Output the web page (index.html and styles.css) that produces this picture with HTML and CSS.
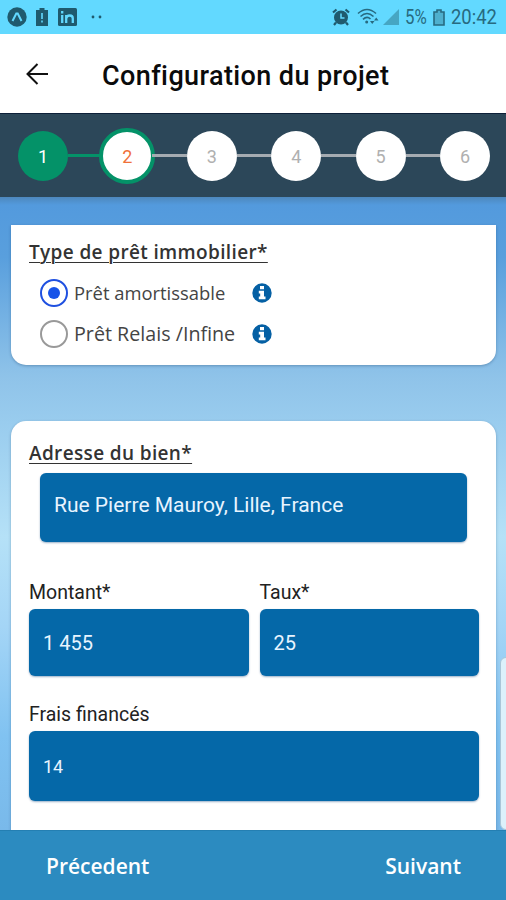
FILE: index.html
```
<!DOCTYPE html>
<html lang="fr">
<head>
    <meta charset="UTF-8">
    <meta name="viewport" content="width=device-width, initial-scale=1.0">
    <title>Configuration du projet</title>
    <link rel="stylesheet" href="styles.css">
</head>
<body>

    <!-- Barre d'état -->
    <div class="status-bar">
        <div class="status-left">
            <svg width="20" height="20" viewBox="0 0 20 20">
                <circle cx="10" cy="10" r="9.7" fill="#1f5a6e"/>
                <path d="M5.500 14L9.300 6.500H10.700L14.500 14" fill="none" stroke="#62d9ff" stroke-width="2"/>
            </svg>
            <svg class="icon-battery-low" width="12" height="18" viewBox="0 0 12 18">
                <path d="M3.500 0h5v2H12v16H0V2h3.500z" fill="#1f5a6e"/>
                <path d="M6 5v6M6 12.500v2" stroke="#62d9ff" stroke-width="1.600"/>
            </svg>
            <svg class="icon-linkedin" width="19" height="18" viewBox="0 0 19 18">
                <rect width="19" height="18" rx="1.500" fill="#1f5a6e"/>
                <path d="M4.200 7v8M4.200 3v2.500M8.200 15V7M8.200 10.500C8.800 6.500 14.800 6.500 14.800 10.500V15" fill="none" stroke="#62d9ff" stroke-width="2.300"/>
            </svg>
            <svg class="icon-dots" width="11" height="4" viewBox="0 0 11 4">
                <circle cx="2" cy="2" r="1.400" fill="#1f5a6e"/>
                <circle cx="9" cy="2" r="1.400" fill="#1f5a6e"/>
            </svg>
        </div>
        <div class="status-right">
            <svg width="18" height="18" viewBox="0 0 18 18">
                <circle cx="9" cy="9.500" r="7" fill="#1f5a6e"/>
                <path d="M1 4.500L4.500 1.500M17 4.500L13.500 1.500M4 14.500L2 17M14 14.500L16 17" stroke="#1f5a6e" stroke-width="2.200"/>
                <path d="M9 5.500V10H12.500" fill="none" stroke="#62d9ff" stroke-width="1.500"/>
            </svg>
            <svg class="icon-wifi" width="22" height="18" viewBox="0 0 22 18">
                <path d="M1 5.500Q10 -2.500 19 5.500M3.500 8.500Q10 2.500 16.500 8.500M6 11.300Q10 7.500 13.500 11" fill="none" stroke="#276a80" stroke-width="1.600"/>
                <circle cx="9.700" cy="14" r="1.500" fill="#276a80"/>
                <path d="M13 13h4.500l-2.250 3zM17 12.500h4.500l-2.250-3z" fill="#276a80"/>
            </svg>
            <svg class="icon-signal" width="16" height="16" viewBox="0 0 16 16">
                <path d="M16 0V16H0z" fill="#46a6c3"/>
            </svg>
            <span class="battery-level">5%</span>
            <svg class="icon-battery" width="12" height="17" viewBox="0 0 12 17">
                <path d="M4 1h4v2h3v13H1V3h3z" fill="#4eb0ce" stroke="#276a80" stroke-width="1.600"/>
            </svg>
            <span class="clock">20:42</span>
        </div>
    </div>

    <header>
        <svg class="back" width="22" height="22" viewBox="0 0 22 22">
            <path d="M22 11H1.500M11.500 1L1.500 11L11.500 21" fill="none" stroke="#111" stroke-width="2"/>
        </svg>
        <h1>Configuration du projet</h1>
    </header>

    <!-- Étapes -->
    <nav class="stepper">
        <div class="step done">1</div>
        <div class="line line-done"></div>
        <div class="step current">2</div>
        <div class="line"></div>
        <div class="step">3</div>
        <div class="line"></div>
        <div class="step">4</div>
        <div class="line"></div>
        <div class="step">5</div>
        <div class="line"></div>
        <div class="step">6</div>
    </nav>

    <main>
        <section class="card card-type">
            <h2>Type de prêt immobilier*</h2>
            <div class="option">
                <span class="radio checked"></span>
                <span class="option-label">Prêt amortissable</span>
                <svg class="info" width="20" height="20" viewBox="0 0 20 20">
                    <circle cx="10" cy="10" r="9.700" fill="#0560a4"/>
                    <path d="M8 3h4v3.200H8zM6.800 7.800H12v5.700h1.500V16.200H6.800v-2.700h1.400v-3H6.800z" fill="#fff"/>
                </svg>
            </div>
            <div class="option">
                <span class="radio"></span>
                <span class="option-label relais">Prêt Relais /Infine</span>
                <svg class="info" width="20" height="20" viewBox="0 0 20 20">
                    <circle cx="10" cy="10" r="9.700" fill="#0560a4"/>
                    <path d="M8 3h4v3.200H8zM6.800 7.800H12v5.700h1.500V16.200H6.800v-2.700h1.400v-3H6.800z" fill="#fff"/>
                </svg>
            </div>
        </section>

        <section class="card card-bien">
            <h2>Adresse du bien*</h2>
            <div class="field adresse">Rue Pierre Mauroy, Lille, France</div>
            <div class="row">
                <div class="col">
                    <div class="label">Montant*</div>
                    <div class="field">1 455</div>
                </div>
                <div class="col">
                    <div class="label">Taux*</div>
                    <div class="field">25</div>
                </div>
            </div>
            <div class="label">Frais financés</div>
            <div class="field frais">14</div>
        </section>
        <div class="edge-panel"></div>
    </main>

    <footer>
        <span>Précedent</span>
        <span>Suivant</span>
    </footer>

</body>
</html>
```
FILE: styles.css
```
* {
    box-sizing: border-box;
}

body {
    font-family: Roboto, sans-serif;
    margin: 0;
    height: 900px;
    display: flex;
    flex-direction: column;
    overflow: hidden;
    background-color: #fff;
    color: #222;
}

.status-bar {
    height: 34px;
    padding: 0 9px 0 7px;
    display: flex;
    justify-content: space-between;
    align-items: center;
    background-color: #62d9ff;
    color: #276a80;
}

.status-left, .status-right {
    display: flex;
    align-items: center;
}

.icon-battery-low {
    margin-left: 9px;
}

.icon-linkedin {
    margin-left: 10px;
}

.icon-dots {
    margin-left: 14px;
}

.icon-wifi {
    margin-left: 7px;
}

.icon-signal {
    margin-left: 4px;
}

.battery-level, .clock {
    font-size: 20px;
    line-height: 34px;
    transform-origin: left center;
    white-space: nowrap;
}

.battery-level {
    width: 23px;
    margin-left: 6px;
    transform: scaleX(0.84);
}

.icon-battery {
    margin-left: 5px;
}

.clock {
    width: 46px;
    margin-left: 6px;
    transform: scaleX(0.92);
}

header {
    height: 79px;
    padding: 0 26px;
    display: flex;
    align-items: center;
}

h1 {
    margin: 4px 0 0 54px;
    font-size: 27px;
    font-weight: 500;
    letter-spacing: 0.4px;
    color: #0b0b0b;
    white-space: nowrap;
}

.stepper {
    height: 84px;
    padding: 0 16px 0 18px;
    display: flex;
    align-items: center;
    background-color: #2c4759;
    border-top: 1px solid #0d2039;
}

.step {
    width: 50px;
    height: 50px;
    border-radius: 50%;
    display: flex;
    align-items: center;
    justify-content: center;
    background-color: #fff;
    color: #b0b0b0;
    font-size: 18px;
    padding-top: 2px;
}

.step.done {
    background-color: #049268;
    color: #fff;
}

.step.current {
    width: 56px;
    height: 56px;
    margin: 0 -3px;
    border: 4px solid #049268;
    color: #f0713a;
}

.line {
    flex: 1;
    height: 3px;
    background-color: #a5abb1;
}

.line-done {
    background-color: #049268;
}

main {
    position: relative;
    height: 633px;
    padding: 28px 10px 0 11px;
    overflow: hidden;
    background: linear-gradient(#4d88bd 0, #539add 8px, #599fdd 60px, #8fc3e9 180px, #99ccee 225px, #b5e1f7 340px, #a4d5f6 430px, #80c2f1 540px, #79b9ea 633px);
}

.card {
    background-color: #fff;
    box-shadow: 0 1px 3px rgba(0, 40, 80, 0.3);
}

.card-type {
    height: 140px;
    padding: 14px 17px 0 18px;
    border-radius: 0 0 15px 15px;
}

h2 {
    margin: 0;
    height: 33px;
    font-family: "Open Sans", sans-serif;
    font-size: 19px;
    line-height: 27px;
    font-weight: 600;
    letter-spacing: 0.36px;
    color: #333;
    text-decoration: underline;
    text-decoration-thickness: 1px;
    text-underline-offset: 3px;
    white-space: nowrap;
}

.option {
    height: 41px;
    padding-left: 11px;
    display: flex;
    align-items: center;
}

.radio {
    width: 28px;
    height: 28px;
    border: 2px solid #999;
    border-radius: 50%;
    display: flex;
    align-items: center;
    justify-content: center;
}

.radio.checked {
    border-width: 2.500px;
    border-color: #1f50e0;
}

.radio.checked::after {
    content: "";
    width: 12px;
    height: 12px;
    border-radius: 50%;
    background-color: #1753e8;
}

.option-label {
    width: 172px;
    margin-left: 6px;
    font-family: "Open Sans", sans-serif;
    font-size: 18.400px;
    color: #444;
    white-space: nowrap;
}

.option-label.relais {
    font-size: 19.700px;
}

.info {
    margin-left: 6px;
}

.card-bien {
    height: 420px;
    margin-top: 56px;
    padding: 19px 17px 0 18px;
    border-radius: 15px 15px 0 0;
}

.field {
    height: 67px;
    padding: 0 14px;
    display: flex;
    align-items: center;
    border-radius: 6px;
    background-color: #0568a8;
    color: #e8f4ff;
    font-size: 20px;
    box-shadow: 0 1px 2px rgba(0, 60, 120, 0.4);
}

.field.adresse {
    height: 69px;
    margin: 0 12px 0 11px;
    padding-bottom: 5px;
    font-size: 21px;
}

.field.frais {
    height: 70px;
    font-size: 18px;
}

.row {
    display: flex;
    gap: 11px;
    margin: 38px 0 26px;
}

.col {
    flex: 1;
}

.label {
    height: 29px;
    font-size: 19.500px;
    line-height: 25px;
}

/* poignée du volet latéral */
.edge-panel {
    position: absolute;
    right: -6px;
    bottom: 0;
    width: 12px;
    height: 173px;
    border: 1px solid #a9c6d8;
    border-radius: 6px;
    background-color: #dcf1fb;
}

footer {
    height: 70px;
    padding: 0 45px 0 46px;
    display: flex;
    align-items: center;
    justify-content: space-between;
    background-color: #2c8bc0;
    border-top: 1px solid #247fb2;
    color: #fff;
    font-family: "Open Sans", sans-serif;
    font-size: 21px;
    font-weight: 600;
}
```
